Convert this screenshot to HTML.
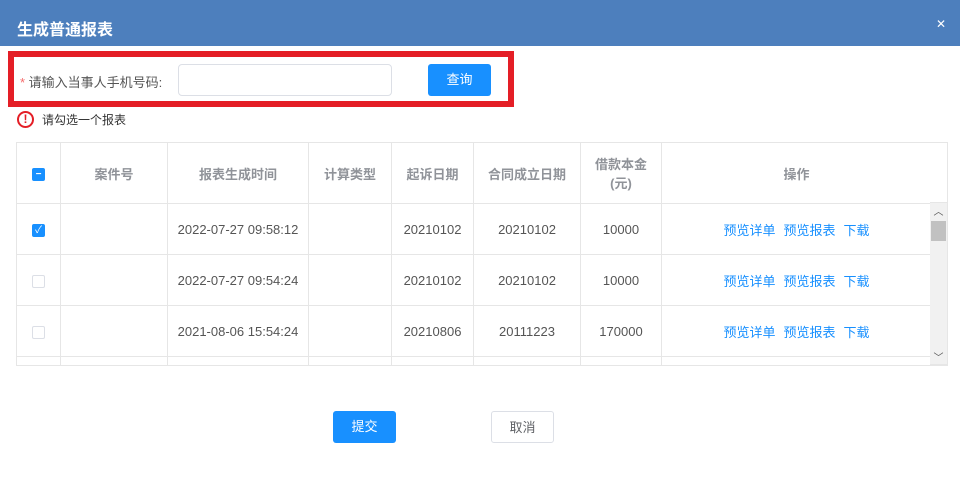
<!DOCTYPE html><html><head><meta charset="utf-8"><style>
*{box-sizing:border-box;margin:0;padding:0}
body{width:960px;height:483px;background:#fff;font-family:"Liberation Sans","Noto Sans CJK SC",sans-serif;font-size:13px;color:#606266;position:relative;overflow:hidden}
.hd{position:absolute;left:0;top:0;width:960px;height:46px;background:#4d7fbd;color:#fff;font-size:16px;font-weight:bold;padding:16px 0 0 17px}
.x{position:absolute;right:14px;top:17px;color:#fff;font-size:12px;font-weight:normal}
.red{position:absolute;left:8px;top:51px;width:506px;height:56px;border:6px solid #e41e26}
.lbl{position:absolute;left:20px;top:72px;font-size:13px;color:#555}
.lbl b{color:#f56c6c;font-weight:normal}
.inp{position:absolute;left:178px;top:64px;width:214px;height:32px;border:1px solid #dcdfe6;border-radius:4px}
.btn{position:absolute;height:32px;border-radius:3px;text-align:center;line-height:32px;font-size:13px}
.pri{background:#1890ff;color:#fff}
.err{position:absolute;left:17px;top:111px;font-size:12px;color:#333;display:flex;align-items:center}
.err i{display:inline-block;width:17px;height:17px;border:2px solid #e41e26;border-radius:50%;color:#e41e26;font-style:normal;font-weight:bold;text-align:center;line-height:13px;font-size:12px;margin-right:8px}
table{position:absolute;left:16px;top:142px;border-collapse:collapse;table-layout:fixed;width:915px}
td,th{border:1px solid #e6e6e6;text-align:center;font-size:13px;color:#555;font-weight:normal}
th{color:#909399;font-weight:bold;height:61px}
td{height:51px}
a{color:#1890ff;text-decoration:none;margin:0 4px}
.cb{display:inline-block;width:13px;height:13px;border:1px solid #dcdfe6;border-radius:2px;vertical-align:middle}
.on{background:#1890ff;border-color:#1890ff;color:#fff;font-size:10px;line-height:11px}
.sb{position:absolute;left:930px;top:203px;width:17px;height:162px;background:#f1f1f1;border-bottom:1px solid #e6e6e6}
.frame{position:absolute;left:16px;top:142px;width:932px;height:224px;border:1px solid #e6e6e6;border-top:none}
</style></head><body>
<div class="hd">生成普通报表<span class="x">✕</span></div>
<div class="red"></div>
<div class="lbl"><b>*</b> 请输入当事人手机号码:</div>
<div class="inp"></div>
<div class="btn pri" style="left:428px;top:64px;width:63px">查询</div>
<div class="err"><i>!</i>请勾选一个报表</div>
<div class="frame"></div>
<div style="position:absolute;left:930px;top:142px;width:18px;height:61px;border:1px solid #e6e6e6;border-left:none"></div>
<div style="position:absolute;left:16px;top:142px;width:915px;height:224px;overflow:hidden">
<table style="left:0;top:0">
<colgroup><col style="width:44px"><col style="width:107px"><col style="width:141px"><col style="width:83px"><col style="width:82px"><col style="width:107px"><col style="width:81px"><col style="width:270px"></colgroup>
<tr><th><span class="cb on">−</span></th><th>案件号</th><th>报表生成时间</th><th>计算类型</th><th>起诉日期</th><th>合同成立日期</th><th>借款本金<br>(元)</th><th>操作</th></tr>
<tr><td><span class="cb on">✓</span></td><td></td><td>2022-07-27 09:58:12</td><td></td><td>20210102</td><td>20210102</td><td>10000</td><td><a>预览详单</a><a>预览报表</a><a>下载</a></td></tr>
<tr><td><span class="cb"></span></td><td></td><td>2022-07-27 09:54:24</td><td></td><td>20210102</td><td>20210102</td><td>10000</td><td><a>预览详单</a><a>预览报表</a><a>下载</a></td></tr>
<tr><td><span class="cb"></span></td><td></td><td>2021-08-06 15:54:24</td><td></td><td>20210806</td><td>20111223</td><td>170000</td><td><a>预览详单</a><a>预览报表</a><a>下载</a></td></tr>
<tr><td></td><td></td><td></td><td></td><td></td><td></td><td></td><td></td></tr>
</table></div>
<div class="sb"><div style="text-align:center;font-size:10px;color:#555;height:16px">︿</div><div style="margin:2px 1px;height:20px;background:#c1c1c1"></div><div style="position:absolute;bottom:0;width:17px;text-align:center;font-size:10px;color:#555">﹀</div></div>
<div class="btn pri" style="left:333px;top:411px;width:63px">提交</div>
<div class="btn" style="left:491px;top:411px;width:63px;border:1px solid #dcdfe6;color:#606266">取消</div>
</body></html>
